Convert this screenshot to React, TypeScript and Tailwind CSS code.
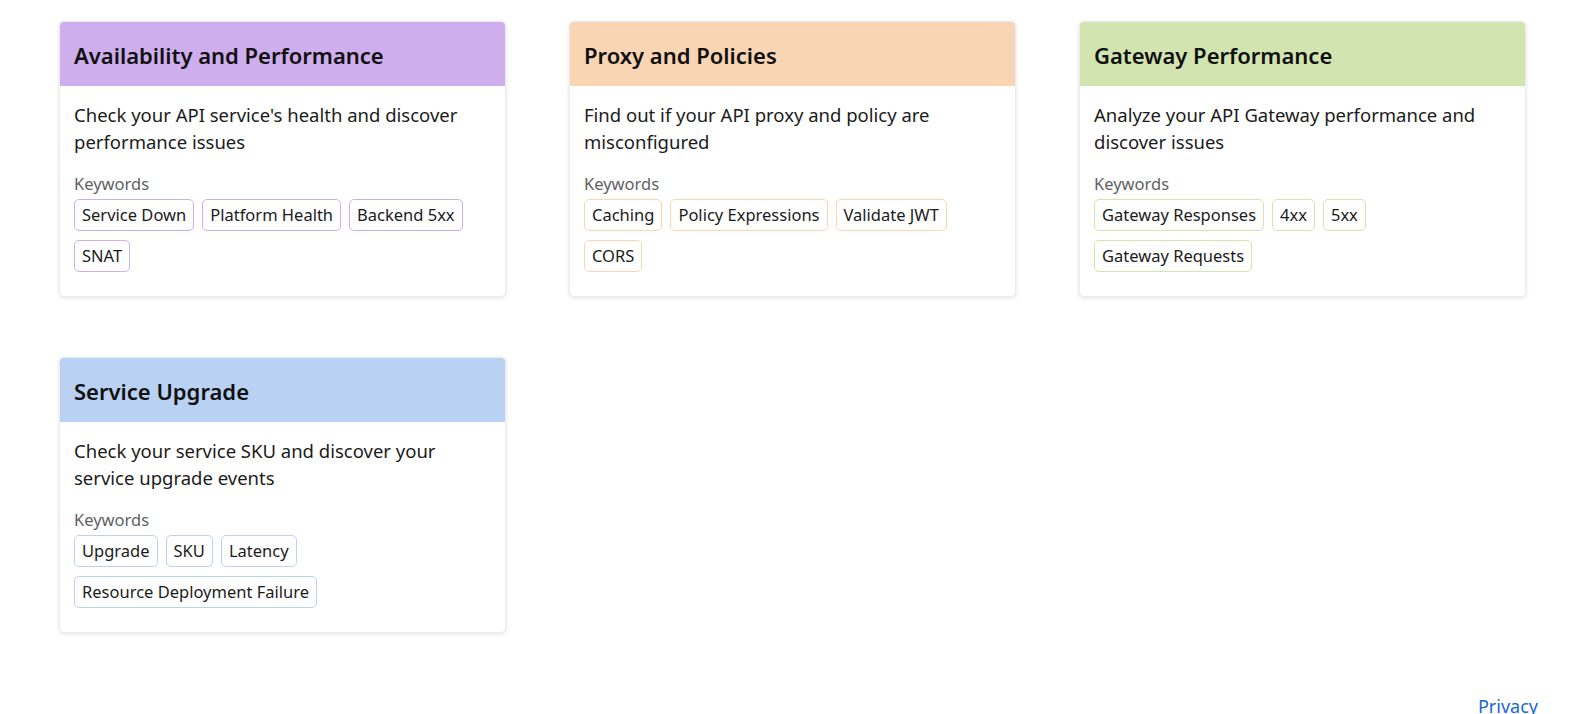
type Card = {
  title: string;
  description: string;
  keywords: string[];
  head: string;
  tag: string;
};

const CARDS: Card[] = [
  {
    title: 'Availability and Performance',
    description: "Check your API service's health and discover performance issues",
    keywords: ['Service Down', 'Platform Health', 'Backend 5xx', 'SNAT'],
    head: 'bg-[#cfaeee]',
    tag: 'border-[#cfaeee]',
  },
  {
    title: 'Proxy and Policies',
    description: 'Find out if your API proxy and policy are misconfigured',
    keywords: ['Caching', 'Policy Expressions', 'Validate JWT', 'CORS'],
    head: 'bg-[#f9d5b4]',
    tag: 'border-[#f9d5b4]',
  },
  {
    title: 'Gateway Performance',
    description: 'Analyze your API Gateway performance and discover issues',
    keywords: ['Gateway Responses', '4xx', '5xx', 'Gateway Requests'],
    head: 'bg-[#d2e5b1]',
    tag: 'border-[#d2e5b1]',
  },
  {
    title: 'Service Upgrade',
    description: 'Check your service SKU and discover your service upgrade events',
    keywords: ['Upgrade', 'SKU', 'Latency', 'Resource Deployment Failure'],
    head: 'bg-[#b9d2f3]',
    tag: 'border-[#b9d2f3]',
  },
];

function CategoryCard({ card }: { card: Card }) {
  return (
    <div className="bg-white rounded-[5px] overflow-hidden border border-[#ececec] shadow-[0_1px_4px_rgba(0,0,0,0.12)]">
      <div className={`${card.head} h-[64px] flex items-center px-[14px] pt-[2px]`}>
        <h2 className="text-[22px] font-semibold text-[#111]">{card.title}</h2>
      </div>
      <div className="px-[14px] pt-[15px] pb-[24px]">
        <p className="text-[18.5px] leading-[27px] text-[#1b1b1b] pr-[30px]">{card.description}</p>
        <div className="mt-[18px] text-[16.5px] leading-[22px] text-[#616161]">Keywords</div>
        <div className="mt-[4px] flex flex-wrap gap-x-[8px] gap-y-[9px]">
          {card.keywords.map(k => (
            <span key={k}
              className={`border ${card.tag} rounded-[5px] h-[32px] px-[7px] flex items-center text-[16.5px] text-[#1b1b1b]`}>
              {k}
            </span>
          ))}
        </div>
      </div>
    </div>
  );
}

export default function App() {
  return (
    <div className="h-screen overflow-hidden bg-white" style={{ fontFamily: '"Noto Sans", "Open Sans", sans-serif' }}>
      <div className="pl-[59px] pt-[21px] grid grid-cols-[repeat(3,447px)] gap-x-[63px] gap-y-[60px] items-start">
        {CARDS.map(c => <CategoryCard key={c.title} card={c} />)}
      </div>
      <div className="flex justify-end pr-[40px] mt-[61px]">
        <a href="#" className="text-[18px] leading-[24px] text-[#1866d6]">Privacy</a>
      </div>
    </div>
  );
}
